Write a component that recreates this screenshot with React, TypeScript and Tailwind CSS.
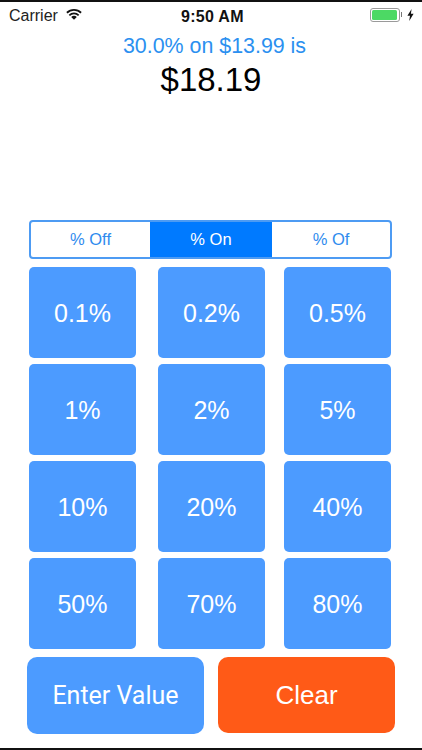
import React from 'react';

const rows = [
  ['0.1%', '0.2%', '0.5%'],
  ['1%', '2%', '5%'],
  ['10%', '20%', '40%'],
  ['50%', '70%', '80%'],
];

const Wifi = () => (
  <svg width="16" height="12" viewBox="0 0 17 12" className="ml-[8px] mt-[-3px]">
    <path d="M0.3 4 A11.5 11.5 0 0 1 16.7 4 L15.4 5.4 A9.7 9.7 0 0 0 1.6 5.4 Z" fill="#111" />
    <path d="M2.9 6.7 A8 8 0 0 1 14.1 6.7 L12.8 8 A6.2 6.2 0 0 0 4.2 8 Z" fill="#111" />
    <path d="M5.5 9.2 A4.4 4.4 0 0 1 11.5 9.2 L8.5 12 Z" fill="#111" />
  </svg>
);

const Battery = () => (
  <div className="flex items-center mt-[-2px]">
    <div className="w-[30px] h-[14px] rounded-[3px] border border-[#9a9a9a] p-px flex">
      <div className="w-[25px] h-full rounded-[1.5px] bg-[#4cd964]" />
    </div>
    <div className="w-[1.5px] h-[5px] bg-[#777] ml-[1px]" />
    <svg width="7" height="12" viewBox="0 0 7 12" className="ml-[5px]">
      <path d="M4.6 0 L0.4 6.8 H3 L2.2 12 L6.6 4.8 H3.9 Z" fill="#111" />
    </svg>
  </div>
);

export default function App() {
  return (
    <div className="w-[422px] h-[750px] bg-white flex flex-col border-t-2 border-b-2 border-[#111] overflow-hidden font-['Liberation_Sans',sans-serif]">
      <div className="h-[27px] shrink-0 pl-[9px] pr-[8px] flex items-center justify-between relative text-[16px] text-[#222]">
        <div className="flex items-center">
          <span>Carrier</span>
          <Wifi />
        </div>
        <span className="absolute left-[181px] top-[3px] text-[16px] font-semibold text-[#111] tracking-[0.3px]">9:50 AM</span>
        <Battery />
      </div>

      <div className="pl-[7px] text-center text-[21.4px] leading-[22px] text-[#2b90f0] mt-[6px]">30.0% on $13.99 is</div>
      <div className="text-center text-[33px] leading-[38px] text-black mt-[4px]">$18.19</div>

      <div className="ml-[29px] mt-[121px] w-[363px] h-[39px] flex rounded-[4px] border-2 border-[#4d9bf3] overflow-hidden text-[16.5px] text-[#2f8bee]">
        <div className="w-[119px] flex items-center justify-center">% Off</div>
        <div className="w-[122px] flex items-center justify-center bg-[#007aff] text-white">% On</div>
        <div className="flex-1 flex items-center justify-center">% Of</div>
      </div>

      <div className="ml-[29px] mt-[8px] grid grid-cols-[129px_126px_107px] gap-y-[6px]">
        {rows.flat().map(v => (
          <div key={v} className="w-[107px] h-[91px] rounded-[5px] bg-[#4c9bff] text-white text-[25px] pt-[2px] flex items-center justify-center">
            {v}
          </div>
        ))}
      </div>

      <div className="ml-[27px] mt-[8px] flex gap-[14px] text-white">
        <div className="w-[177px] h-[77px] rounded-[10px] bg-[#4c9bff] flex items-center justify-center text-[25px] font-['Roboto',sans-serif]">Enter Value</div>
        <div className="w-[177px] h-[76px] rounded-[10px] bg-[#ff5a17] flex items-center justify-center text-[26px]">Clear</div>
      </div>
    </div>
  );
}
